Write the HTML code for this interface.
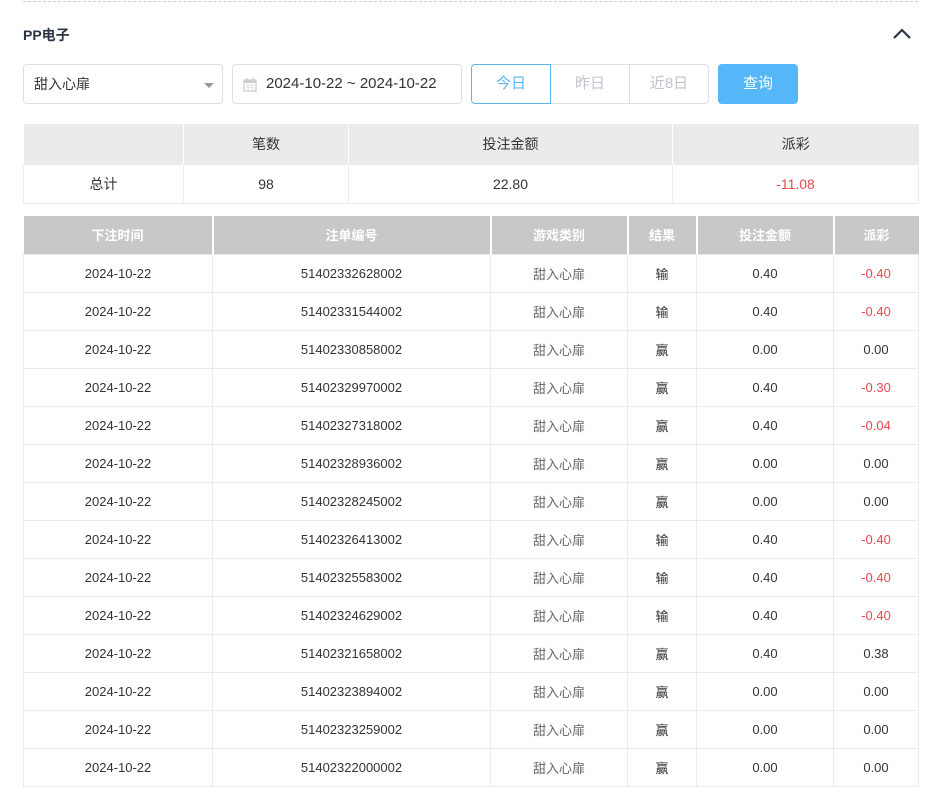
<!DOCTYPE html>
<html><head><meta charset="utf-8"><style>
*{margin:0;padding:0;box-sizing:border-box}
body{width:947px;height:763px;overflow:hidden;background:#fff;font-family:"Liberation Sans","Noto Sans CJK SC",sans-serif;color:#333;position:relative}
.dash{position:absolute;left:23px;top:1px;width:895px;border-top:1px dashed #ccc}
.title{position:absolute;left:23px;top:25px;font-size:14px;font-weight:bold;color:#2b3444}
.chev{position:absolute;left:892px;top:28px}
.sel{position:absolute;left:23px;top:64px;width:200px;height:40px;border:1px solid #dcdfe6;border-radius:4px;font-size:14px;line-height:38px;padding-left:10px;color:#333}
.sel:after{content:"";position:absolute;right:8px;top:18px;border:5px solid transparent;border-top-color:#999}
.date{position:absolute;left:232px;top:64px;width:230px;height:40px;border:1px solid #dcdfe6;border-radius:4px;font-size:15px;line-height:38px;padding-left:33px;color:#333}
.date svg{position:absolute;left:10px;top:12px}
.grp{position:absolute;left:471px;top:64px;height:40px;display:flex}
.grp div{width:80px;height:40px;border:1px solid #dcdfe6;text-align:center;line-height:38px;font-size:15px;color:#c0c4cc;margin-left:-1px}
.grp div:first-child{border-color:#5cb6ef;color:#5cb6ef;border-radius:4px 0 0 4px;position:relative;z-index:1;margin-left:0}
.grp div:last-child{border-radius:0 4px 4px 0}
.btn{position:absolute;left:718px;top:64px;width:80px;height:40px;background:#55b7f7;border-radius:4px;color:#fff;font-size:15px;text-align:center;line-height:40px}
table{position:absolute;border-collapse:collapse;table-layout:fixed;font-size:14px}
.sum{left:23px;top:124px;width:895px}
.sum th{background:#ebebeb;height:40px;font-weight:normal;border-left:1px solid #fff;color:#333}
.sum td{height:39px;text-align:center;border:1px solid #ebebeb}
.main{left:23px;top:216px;width:895px;font-size:13px}
.main th{background:#c8c8c8;color:#fff;height:38px;font-weight:bold;border-left:2px solid #fff}
.main th:first-child{border-left:0}
.main td{height:38px;text-align:center;border:1px solid #ebebeb;color:#333;font-weight:normal}
.main td:nth-child(3){color:#666}
.r{color:#e8484f!important}
</style></head><body>
<div class="dash"></div>
<div class="title">PP电子</div>
<svg class="chev" width="20" height="12" viewBox="0 0 20 12"><path d="M2 10 L10 2 L18 10" fill="none" stroke="#2b3444" stroke-width="2.2"/></svg>
<div class="sel">甜入心扉</div>
<div class="date"><svg width="14" height="15" viewBox="0 0 14 15"><rect x="1" y="3" width="12" height="11" fill="none" stroke="#ccc" stroke-width="1.3"/><rect x="1" y="3" width="12" height="3" fill="#ccc"/><path d="M4 1v3M10 1v3" stroke="#ccc" stroke-width="1.3"/><path d="M3 8h8M3 10.5h8M5 7v6M9 7v6" stroke="#ddd" stroke-width="0.8"/></svg>2024-10-22 ~ 2024-10-22</div>
<div class="grp"><div>今日</div><div>昨日</div><div>近8日</div></div>
<div class="btn">查询</div>
<table class="sum"><colgroup><col style="width:160px"><col style="width:165px"><col style="width:324px"><col style="width:246px"></colgroup>
<tr><th></th><th>笔数</th><th>投注金额</th><th>派彩</th></tr>
<tr><td>总计</td><td>98</td><td>22.80</td><td class="r">-11.08</td></tr></table>
<table class="main"><colgroup><col style="width:189px"><col style="width:278px"><col style="width:137px"><col style="width:69px"><col style="width:137px"><col style="width:85px"></colgroup>
<tr><th>下注时间</th><th>注单编号</th><th>游戏类别</th><th>结果</th><th>投注金额</th><th>派彩</th></tr>
<tr><td>2024-10-22</td><td>51402332628002</td><td>甜入心扉</td><td>输</td><td>0.40</td><td class="r">-0.40</td></tr>
<tr><td>2024-10-22</td><td>51402331544002</td><td>甜入心扉</td><td>输</td><td>0.40</td><td class="r">-0.40</td></tr>
<tr><td>2024-10-22</td><td>51402330858002</td><td>甜入心扉</td><td>赢</td><td>0.00</td><td>0.00</td></tr>
<tr><td>2024-10-22</td><td>51402329970002</td><td>甜入心扉</td><td>赢</td><td>0.40</td><td class="r">-0.30</td></tr>
<tr><td>2024-10-22</td><td>51402327318002</td><td>甜入心扉</td><td>赢</td><td>0.40</td><td class="r">-0.04</td></tr>
<tr><td>2024-10-22</td><td>51402328936002</td><td>甜入心扉</td><td>赢</td><td>0.00</td><td>0.00</td></tr>
<tr><td>2024-10-22</td><td>51402328245002</td><td>甜入心扉</td><td>赢</td><td>0.00</td><td>0.00</td></tr>
<tr><td>2024-10-22</td><td>51402326413002</td><td>甜入心扉</td><td>输</td><td>0.40</td><td class="r">-0.40</td></tr>
<tr><td>2024-10-22</td><td>51402325583002</td><td>甜入心扉</td><td>输</td><td>0.40</td><td class="r">-0.40</td></tr>
<tr><td>2024-10-22</td><td>51402324629002</td><td>甜入心扉</td><td>输</td><td>0.40</td><td class="r">-0.40</td></tr>
<tr><td>2024-10-22</td><td>51402321658002</td><td>甜入心扉</td><td>赢</td><td>0.40</td><td>0.38</td></tr>
<tr><td>2024-10-22</td><td>51402323894002</td><td>甜入心扉</td><td>赢</td><td>0.00</td><td>0.00</td></tr>
<tr><td>2024-10-22</td><td>51402323259002</td><td>甜入心扉</td><td>赢</td><td>0.00</td><td>0.00</td></tr>
<tr><td>2024-10-22</td><td>51402322000002</td><td>甜入心扉</td><td>赢</td><td>0.00</td><td>0.00</td></tr>
</table>
</body></html>
